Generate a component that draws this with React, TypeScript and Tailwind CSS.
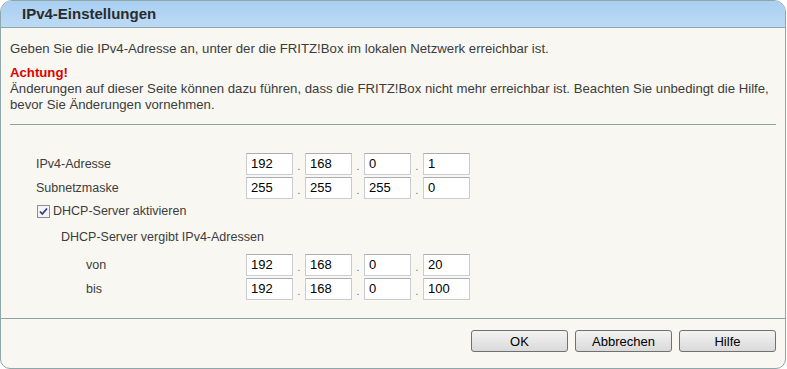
import React from "react"

const IpField = ({ parts }: { parts: string[] }) => (
  <div className="flex items-center">
    {parts.map((p, i) => (
      <div key={i} className="flex items-center">
        {i > 0 && <span className="w-[12px] text-center text-[10px] leading-none text-[#666] pt-[6px]">.</span>}
        <div className="w-[47px] h-[22px] bg-white border border-[#c9ccd1] border-t-[#abadb3] pl-[4px] text-[13px] leading-[20px] text-black">
          {p}
        </div>
      </div>
    ))}
  </div>
)

const Row = ({ label, parts, indent }: { label: string; parts: string[]; indent: string }) => (
  <div className="flex items-center h-[22px]">
    <div className={`${indent} text-[12.5px] text-[#3c3c3c]`}>{label}</div>
    <IpField parts={parts} />
  </div>
)

const Btn = ({ label }: { label: string }) => (
  <button className="w-[97px] h-[22px] rounded-[3px] border border-[#707070] bg-gradient-to-b from-[#f3f3f3] to-[#dadada] text-[13px] text-black leading-none">
    {label}
  </button>
)

export default function App() {
  return (
    <div className="w-[787px] h-[369px] bg-white font-['Liberation_Sans',Arial,sans-serif]">
      <div className="w-[786px] h-[369px] flex flex-col border border-[#8fa6aa] rounded-t-[12px] rounded-b-[10px] bg-[#f8f7f2] overflow-hidden">
        <div className="h-[27px] shrink-0 bg-gradient-to-b from-[#a9cff1] to-[#bcdaf5] border-b border-[#8fa6aa] pl-[21px] flex items-center">
          <span className="text-[15px] font-bold text-[#2b2b2b]">IPv4-Einstellungen</span>
        </div>

        <div className="px-[9px] pt-[13px] text-[13.2px] leading-[16px] text-[#3c3c3c]">
          <p>Geben Sie die IPv4-Adresse an, unter der die FRITZ!Box im lokalen Netzwerk erreichbar ist.</p>
          <p className="mt-[8px] font-bold text-[#e00000]">Achtung!</p>
          <p>
            Änderungen auf dieser Seite können dazu führen, dass die FRITZ!Box nicht mehr erreichbar ist. Beachten Sie
            unbedingt die Hilfe, bevor Sie Änderungen vornehmen.
          </p>
          <div className="mt-[11px] h-px bg-[#8fa3a5]" />
        </div>

        <div className="pt-[28px] flex flex-col">
          <div className="flex flex-col gap-[2px]">
            <Row label="IPv4-Adresse" parts={["192", "168", "0", "1"]} indent="pl-[35px] w-[245px]" />
            <Row label="Subnetzmaske" parts={["255", "255", "255", "0"]} indent="pl-[35px] w-[245px]" />
          </div>
          <div className="flex items-center h-[22px] pl-[36px] mt-[1px]">
            <svg width="13" height="13" viewBox="0 0 13 13" className="mr-[3px]">
              <rect x="0.5" y="0.5" width="12" height="12" fill="#f4f4f4" stroke="#8a8f9a" />
              <path d="M3 6.5 L5.3 9 L10 3.5" fill="none" stroke="#2f3f80" strokeWidth="1.8" />
            </svg>
            <span className="text-[12.5px] text-[#3c3c3c]">DHCP-Server aktivieren</span>
          </div>
          <div className="pl-[60px] h-[24px] flex items-center text-[12.5px] text-[#3c3c3c] mt-[3px]">
            DHCP-Server vergibt IPv4-Adressen
          </div>
          <div className="flex flex-col gap-[2px] mt-[5px]">
            <Row label="von" parts={["192", "168", "0", "20"]} indent="pl-[85px] w-[245px]" />
            <Row label="bis" parts={["192", "168", "0", "100"]} indent="pl-[85px] w-[245px]" />
          </div>
        </div>

        <div className="mt-auto border-t border-[#8fa3a5] h-[50px] flex items-start justify-end gap-[7px] pr-[9px] pt-[11px]">
          <Btn label="OK" />
          <Btn label="Abbrechen" />
          <Btn label="Hilfe" />
        </div>
      </div>
    </div>
  )
}
